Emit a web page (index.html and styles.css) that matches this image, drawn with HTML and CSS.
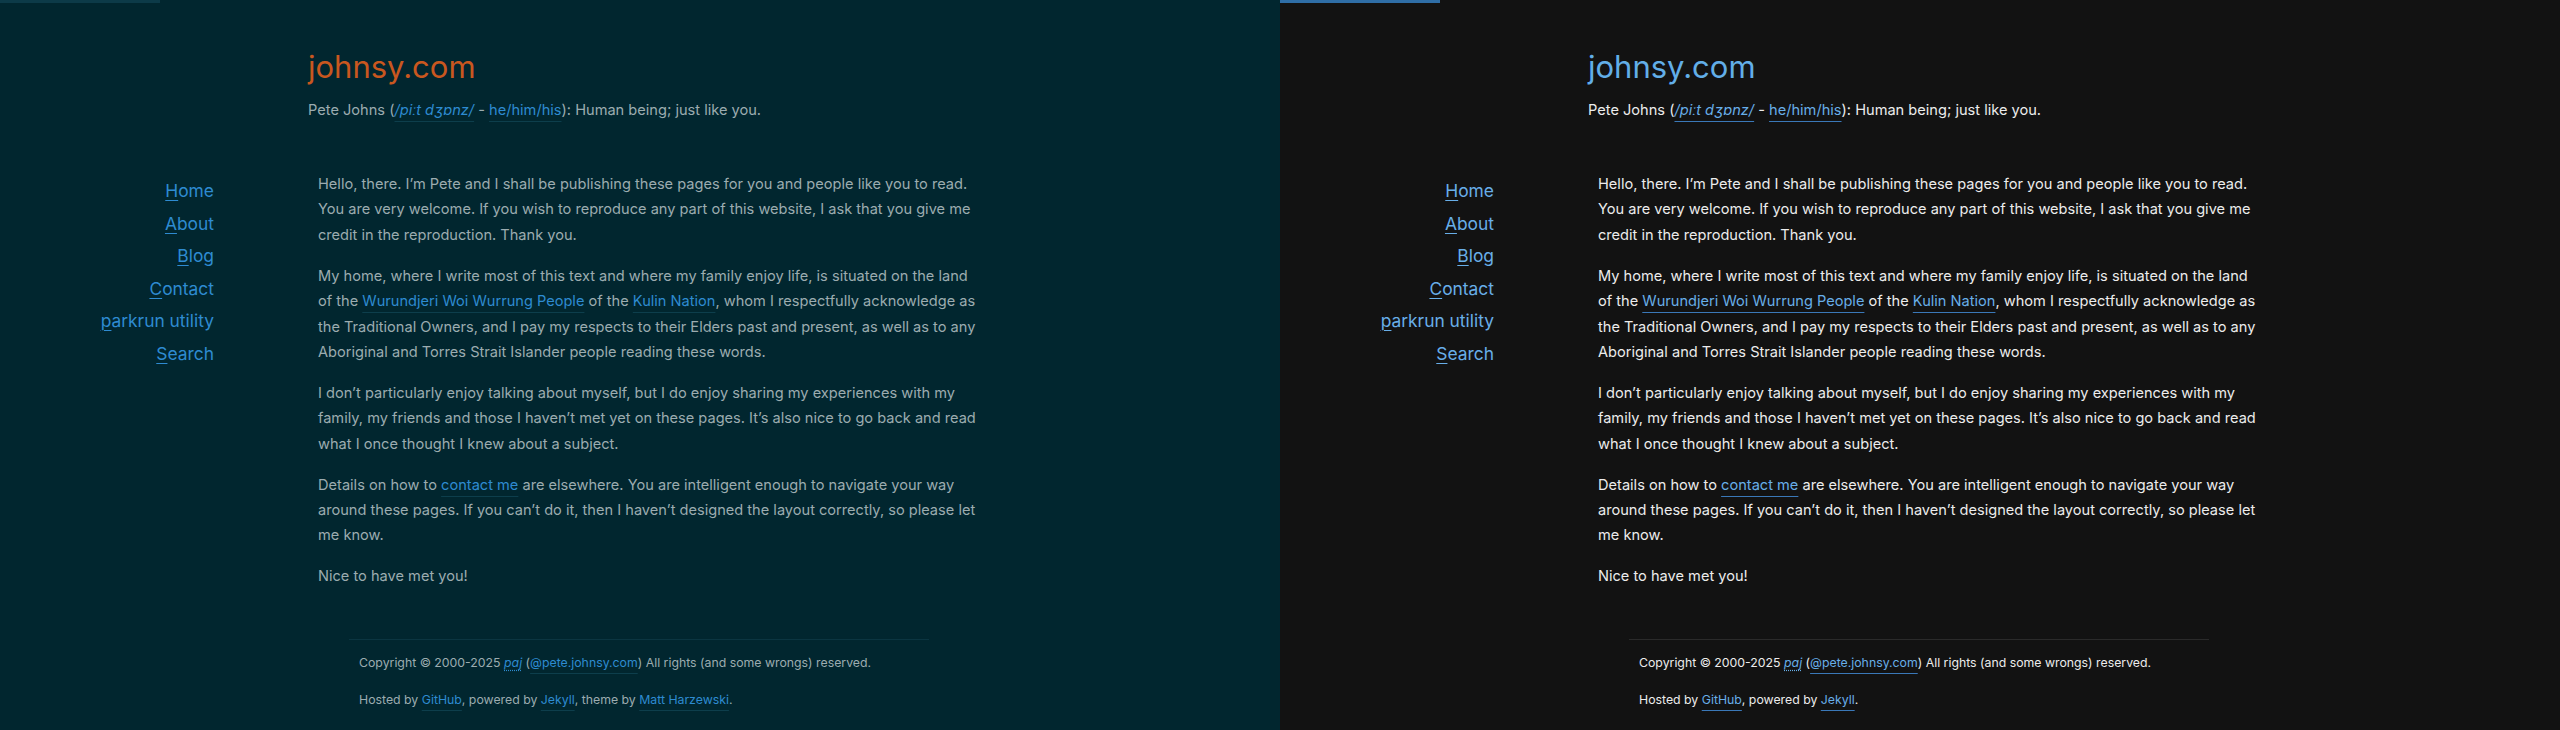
FILE: index.html
```html
<!DOCTYPE html>
<html lang="en">
<head>
<meta charset="utf-8">
<title>johnsy.com</title>
<link rel="stylesheet" href="styles.css">
</head>
<body>
<div class="panel solar">
  <div class="progress"></div>
  <header class="header">
    <h1 class="title"><a href="#">johnsy.com</a></h1>
    <p class="tagline">Pete Johns (<a class="ln" href="#"><i>/piːt dʒɒnz/</i></a> - <a class="ln" href="#">he/him/his</a>): Human being; just like you.</p>
  </header>
  <div class="layout">
    <nav class="nav">
      <a href="#"><u>H</u>ome</a>
      <a href="#"><u>A</u>bout</a>
      <a href="#"><u>B</u>log</a>
      <a href="#"><u>C</u>ontact</a>
      <a href="#"><u>p</u>arkrun utility</a>
      <a href="#"><u>S</u>earch</a>
    </nav>
    <main class="main">
      <p>Hello, there. I’m Pete and I shall be publishing these pages for you and people like you to read. You are very welcome. If you wish to reproduce any part of this website, I ask that you give me credit in the reproduction. Thank you.</p>
      <p>My home, where I write most of this text and where my family enjoy life, is situated on the land of the <a class="ln" href="#">Wurundjeri Woi Wurrung People</a> of the <a class="ln" href="#">Kulin Nation</a>, whom I respectfully acknowledge as the Traditional Owners, and I pay my respects to their Elders past and present, as well as to any Aboriginal and Torres Strait Islander people reading these words.</p>
      <p>I don’t particularly enjoy talking about myself, but I do enjoy sharing my experiences with my family, my friends and those I haven’t met yet on these pages. It’s also nice to go back and read what I once thought I knew about a subject.</p>
      <p>Details on how to <a class="ln" href="#">contact me</a> are elsewhere. You are intelligent enough to navigate your way around these pages. If you can’t do it, then I haven’t designed the layout correctly, so please let me know.</p>
      <p>Nice to have met you!</p>
    </main>
  </div>
  <footer class="footer">
    <p>Copyright © 2000-2025 <abbr class="abbr" title="Pete Andrew Johns">paj</abbr> (<a class="ln" href="#">@pete.johnsy.com</a>) All rights (and some wrongs) reserved.</p>
    <p>Hosted by <a class="ln" href="#">GitHub</a>, powered by <a class="ln" href="#">Jekyll</a>, theme by <a class="ln" href="#">Matt Harzewski</a>.</p>
  </footer>
</div>
<div class="panel dark">
  <div class="progress"></div>
  <header class="header">
    <h1 class="title"><a href="#">johnsy.com</a></h1>
    <p class="tagline">Pete Johns (<a class="ln" href="#"><i>/piːt dʒɒnz/</i></a> - <a class="ln" href="#">he/him/his</a>): Human being; just like you.</p>
  </header>
  <div class="layout">
    <nav class="nav">
      <a href="#"><u>H</u>ome</a>
      <a href="#"><u>A</u>bout</a>
      <a href="#"><u>B</u>log</a>
      <a href="#"><u>C</u>ontact</a>
      <a href="#"><u>p</u>arkrun utility</a>
      <a href="#"><u>S</u>earch</a>
    </nav>
    <main class="main">
      <p>Hello, there. I’m Pete and I shall be publishing these pages for you and people like you to read. You are very welcome. If you wish to reproduce any part of this website, I ask that you give me credit in the reproduction. Thank you.</p>
      <p>My home, where I write most of this text and where my family enjoy life, is situated on the land of the <a class="ln" href="#">Wurundjeri Woi Wurrung People</a> of the <a class="ln" href="#">Kulin Nation</a>, whom I respectfully acknowledge as the Traditional Owners, and I pay my respects to their Elders past and present, as well as to any Aboriginal and Torres Strait Islander people reading these words.</p>
      <p>I don’t particularly enjoy talking about myself, but I do enjoy sharing my experiences with my family, my friends and those I haven’t met yet on these pages. It’s also nice to go back and read what I once thought I knew about a subject.</p>
      <p>Details on how to <a class="ln" href="#">contact me</a> are elsewhere. You are intelligent enough to navigate your way around these pages. If you can’t do it, then I haven’t designed the layout correctly, so please let me know.</p>
      <p>Nice to have met you!</p>
    </main>
  </div>
  <footer class="footer">
    <p>Copyright © 2000-2025 <abbr class="abbr" title="Pete Andrew Johns">paj</abbr> (<a class="ln" href="#">@pete.johnsy.com</a>) All rights (and some wrongs) reserved.</p>
    <p>Hosted by <a class="ln" href="#">GitHub</a>, powered by <a class="ln" href="#">Jekyll</a>.</p>
  </footer>
</div>
</body>
</html>
```
FILE: styles.css
```css
* { box-sizing: border-box; }
html, body { margin: 0; padding: 0; }
body {
  display: flex;
  width: 2560px;
  height: 730px;
  overflow: hidden;
  font-family: Inter, "Liberation Sans", Arial, sans-serif;
}
.panel {
  width: 1280px;
  height: 730px;
  flex: none;
  overflow: hidden;
}
.solar { background: #01262f; color: #9cacb0; --link: #2e8bd1; --line: #0d3e4c; --title: #c9571f; --bar: #0c3a48; --hr: #0b3541; }
.dark { background: #121212; color: #ececec; --link: #68aee8; --line: #3a78b8; --title: #62aee8; --bar: #2f6ea6; --hr: #2a2a2a; }

.progress { width: 160px; height: 3px; background: var(--bar); }

.header { padding: 45px 0 0 308px; }
.title {
  margin: 0;
  font-size: 31px;
  line-height: 38px;
  font-weight: normal;
}
.title a { color: var(--title); text-decoration: none; }
.tagline {
  margin: 13px 0 0;
  font-size: 14.6px;
  line-height: 22px;
}

a { color: var(--link); text-decoration: none; }
.ln {
  text-decoration: underline;
  text-decoration-color: var(--line);
  text-decoration-thickness: 1px;
  text-underline-offset: 6px;
}

.layout {
  display: flex;
  margin-top: 51px;
}
.nav {
  width: 214px;
  flex: none;
  display: flex;
  flex-direction: column;
  align-items: flex-end;
  padding-top: 3px;
}
.nav a {
  font-size: 17.4px;
  line-height: 32.5px;
}
.nav u { text-decoration-thickness: 1px; text-underline-offset: 3px; }
.main {
  margin-left: 104px;
  width: 663px;
  font-size: 14.6px;
  line-height: 25.4px;
}
.main p { margin: 0 0 15.5px; }

.footer {
  margin: 34px 0 0 349px;
  width: 580px;
  border-top: 1px solid var(--hr);
  padding: 13px 10px 0;
  font-size: 12.3px;
  line-height: 20px;
}
.footer p { margin: 0 0 17px; }
.abbr {
  color: var(--link);
  font-style: italic;
  text-decoration: underline dotted;
  text-underline-offset: 3px;
}
```
